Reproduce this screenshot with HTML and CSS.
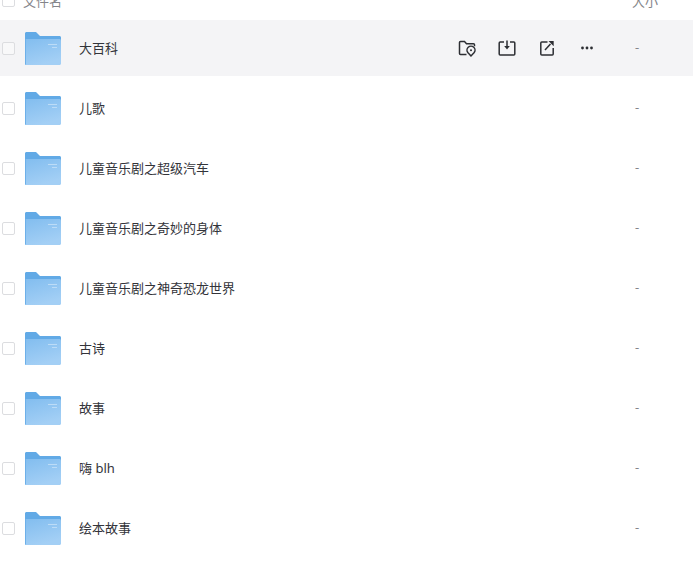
FILE: index.html
```html
<!DOCTYPE html>
<html lang="zh-CN">
<head>
    <meta charset="UTF-8">
    <title>文件列表</title>
    <link rel="stylesheet" href="styles.css">
</head>
<body>
    <svg class="defs" width="0" height="0">
        <defs>
            <linearGradient id="folderBody" x1="0" y1="0" x2="0.4" y2="1">
                <stop offset="0" stop-color="#82bdef"/>
                <stop offset="1" stop-color="#a3cff5"/>
            </linearGradient>
            <symbol id="folder" viewBox="0 0 36 33">
                <path d="M0 1.500C0 .7.7 0 1.500 0H11l4 4h19.500c.8 0 1.500.7 1.500 1.500V12H0z" fill="#62aae6"/>
                <path d="M0 7h34.500c.8 0 1.500.7 1.500 1.500v23c0 .8-.7 1.500-1.500 1.500h-33C.7 33 0 32.300 0 31.500z" fill="url(#folderBody)"/>
                <path d="M0 7h1v26h-.2C.300 32.800 0 32.200 0 31.500z" fill="#6db0e9"/>
                <path d="M23 12h9v1h-9zM27 15h5v1h-5z" fill="#bcdcf7"/>
            </symbol>
        </defs>
    </svg>

    <div class="file-list">
        <div class="list-head">
            <span class="check"></span>
            <span class="head-name">文件名</span>
            <span class="head-size">大小</span>
        </div>

        <div class="file-row hover">
            <span class="check"></span>
            <svg class="folder"><use href="#folder"/></svg>
            <span class="file-name">大百科</span>
            <div class="row-actions">
                <svg class="act" viewBox="0 0 20 20" fill="none" stroke="#2c2e33" stroke-width="1.500">
                    <path d="M9.500 16.500H3.500a1 1 0 0 1-1-1v-11a1 1 0 0 1 1-1h4l2 2.200h7a1 1 0 0 1 1 1v1.500"/>
                    <path d="M14 18l-3-3.200a4 4 0 1 1 6 0z" fill="#f4f4f6"/>
                    <circle cx="14" cy="12.200" r="1" fill="#2c2e33" stroke="none"/>
                </svg>
                <svg class="act" viewBox="0 0 20 20" fill="none" stroke="#2c2e33" stroke-width="1.500">
                    <path d="M7 4H3.200a1 1 0 0 0-1 1v11a1 1 0 0 0 1 1h13.600a1 1 0 0 0 1-1V5a1 1 0 0 0-1-1H13"/>
                    <path d="M10 2.500V9"/>
                    <path d="M7.200 8h5.600L10 11.500z" fill="#2c2e33" stroke="none"/>
                </svg>
                <svg class="act" viewBox="0 0 20 20" fill="none" stroke="#2c2e33" stroke-width="1.500">
                    <path d="M10.500 4H4.800a1 1 0 0 0-1 1v11a1 1 0 0 0 1 1h10.400a1 1 0 0 0 1-1v-6"/>
                    <path d="M8 12l5.500-6"/>
                    <path d="M11.500 3h5.200v5.200z" fill="#2c2e33" stroke="none"/>
                </svg>
                <svg class="act" viewBox="0 0 20 20" fill="#2c2e33">
                    <circle cx="5.500" cy="10" r="1.400"/>
                    <circle cx="10" cy="10" r="1.400"/>
                    <circle cx="14.500" cy="10" r="1.400"/>
                </svg>
            </div>
            <span class="file-size">-</span>
        </div>

        <div class="file-row">
            <span class="check"></span>
            <svg class="folder"><use href="#folder"/></svg>
            <span class="file-name">儿歌</span>
            <span class="file-size">-</span>
        </div>
        <div class="file-row">
            <span class="check"></span>
            <svg class="folder"><use href="#folder"/></svg>
            <span class="file-name">儿童音乐剧之超级汽车</span>
            <span class="file-size">-</span>
        </div>
        <div class="file-row">
            <span class="check"></span>
            <svg class="folder"><use href="#folder"/></svg>
            <span class="file-name">儿童音乐剧之奇妙的身体</span>
            <span class="file-size">-</span>
        </div>
        <div class="file-row">
            <span class="check"></span>
            <svg class="folder"><use href="#folder"/></svg>
            <span class="file-name">儿童音乐剧之神奇恐龙世界</span>
            <span class="file-size">-</span>
        </div>
        <div class="file-row">
            <span class="check"></span>
            <svg class="folder"><use href="#folder"/></svg>
            <span class="file-name">古诗</span>
            <span class="file-size">-</span>
        </div>
        <div class="file-row">
            <span class="check"></span>
            <svg class="folder"><use href="#folder"/></svg>
            <span class="file-name">故事</span>
            <span class="file-size">-</span>
        </div>
        <div class="file-row">
            <span class="check"></span>
            <svg class="folder"><use href="#folder"/></svg>
            <span class="file-name">嗨 blh</span>
            <span class="file-size">-</span>
        </div>
        <div class="file-row">
            <span class="check"></span>
            <svg class="folder"><use href="#folder"/></svg>
            <span class="file-name">绘本故事</span>
            <span class="file-size">-</span>
        </div>
    </div>
</body>
</html>
```

FILE: styles.css
```css
html, body {
    height: 100%;
    overflow: hidden;
}
body {
    margin: 0;
    background-color: #fff;
    color: #33343a;
    font-family: "Noto Sans", "Noto Sans CJK SC", sans-serif;
    font-size: 13px;
}
.defs {
    position: absolute;
}
.file-list {
    margin-top: -20px;
}
.list-head {
    display: flex;
    align-items: center;
    height: 40px;
    color: #84858a;
}
.head-name {
    margin-left: 8px;
}
.head-size {
    margin-left: auto;
    margin-right: 35px;
}
.check {
    flex: none;
    box-sizing: border-box;
    width: 13px;
    height: 13px;
    margin-left: 2px;
    border: 1px solid #dcdde0;
    border-radius: 2px;
    background-color: #fff;
}
.file-row {
    display: flex;
    align-items: center;
    height: 56px;
    margin-bottom: 4px;
}
.file-row.hover {
    background-color: #f4f4f6;
}
.hover .check {
    background-color: #f8f8f9;
}
.folder {
    flex: none;
    width: 36px;
    height: 33px;
    margin-left: 10px;
}
.file-name {
    margin-left: 18px;
    padding-bottom: 2px;
}
.row-actions {
    display: flex;
    gap: 20px;
    margin-left: auto;
}
.act {
    display: block;
    width: 20px;
    height: 20px;
}
.file-size {
    flex: none;
    width: 58px;
    padding-bottom: 2px;
    color: #84858a;
}
.file-row:not(.hover) .file-size {
    margin-left: auto;
}
.hover .file-size {
    margin-left: 38px;
}
```
